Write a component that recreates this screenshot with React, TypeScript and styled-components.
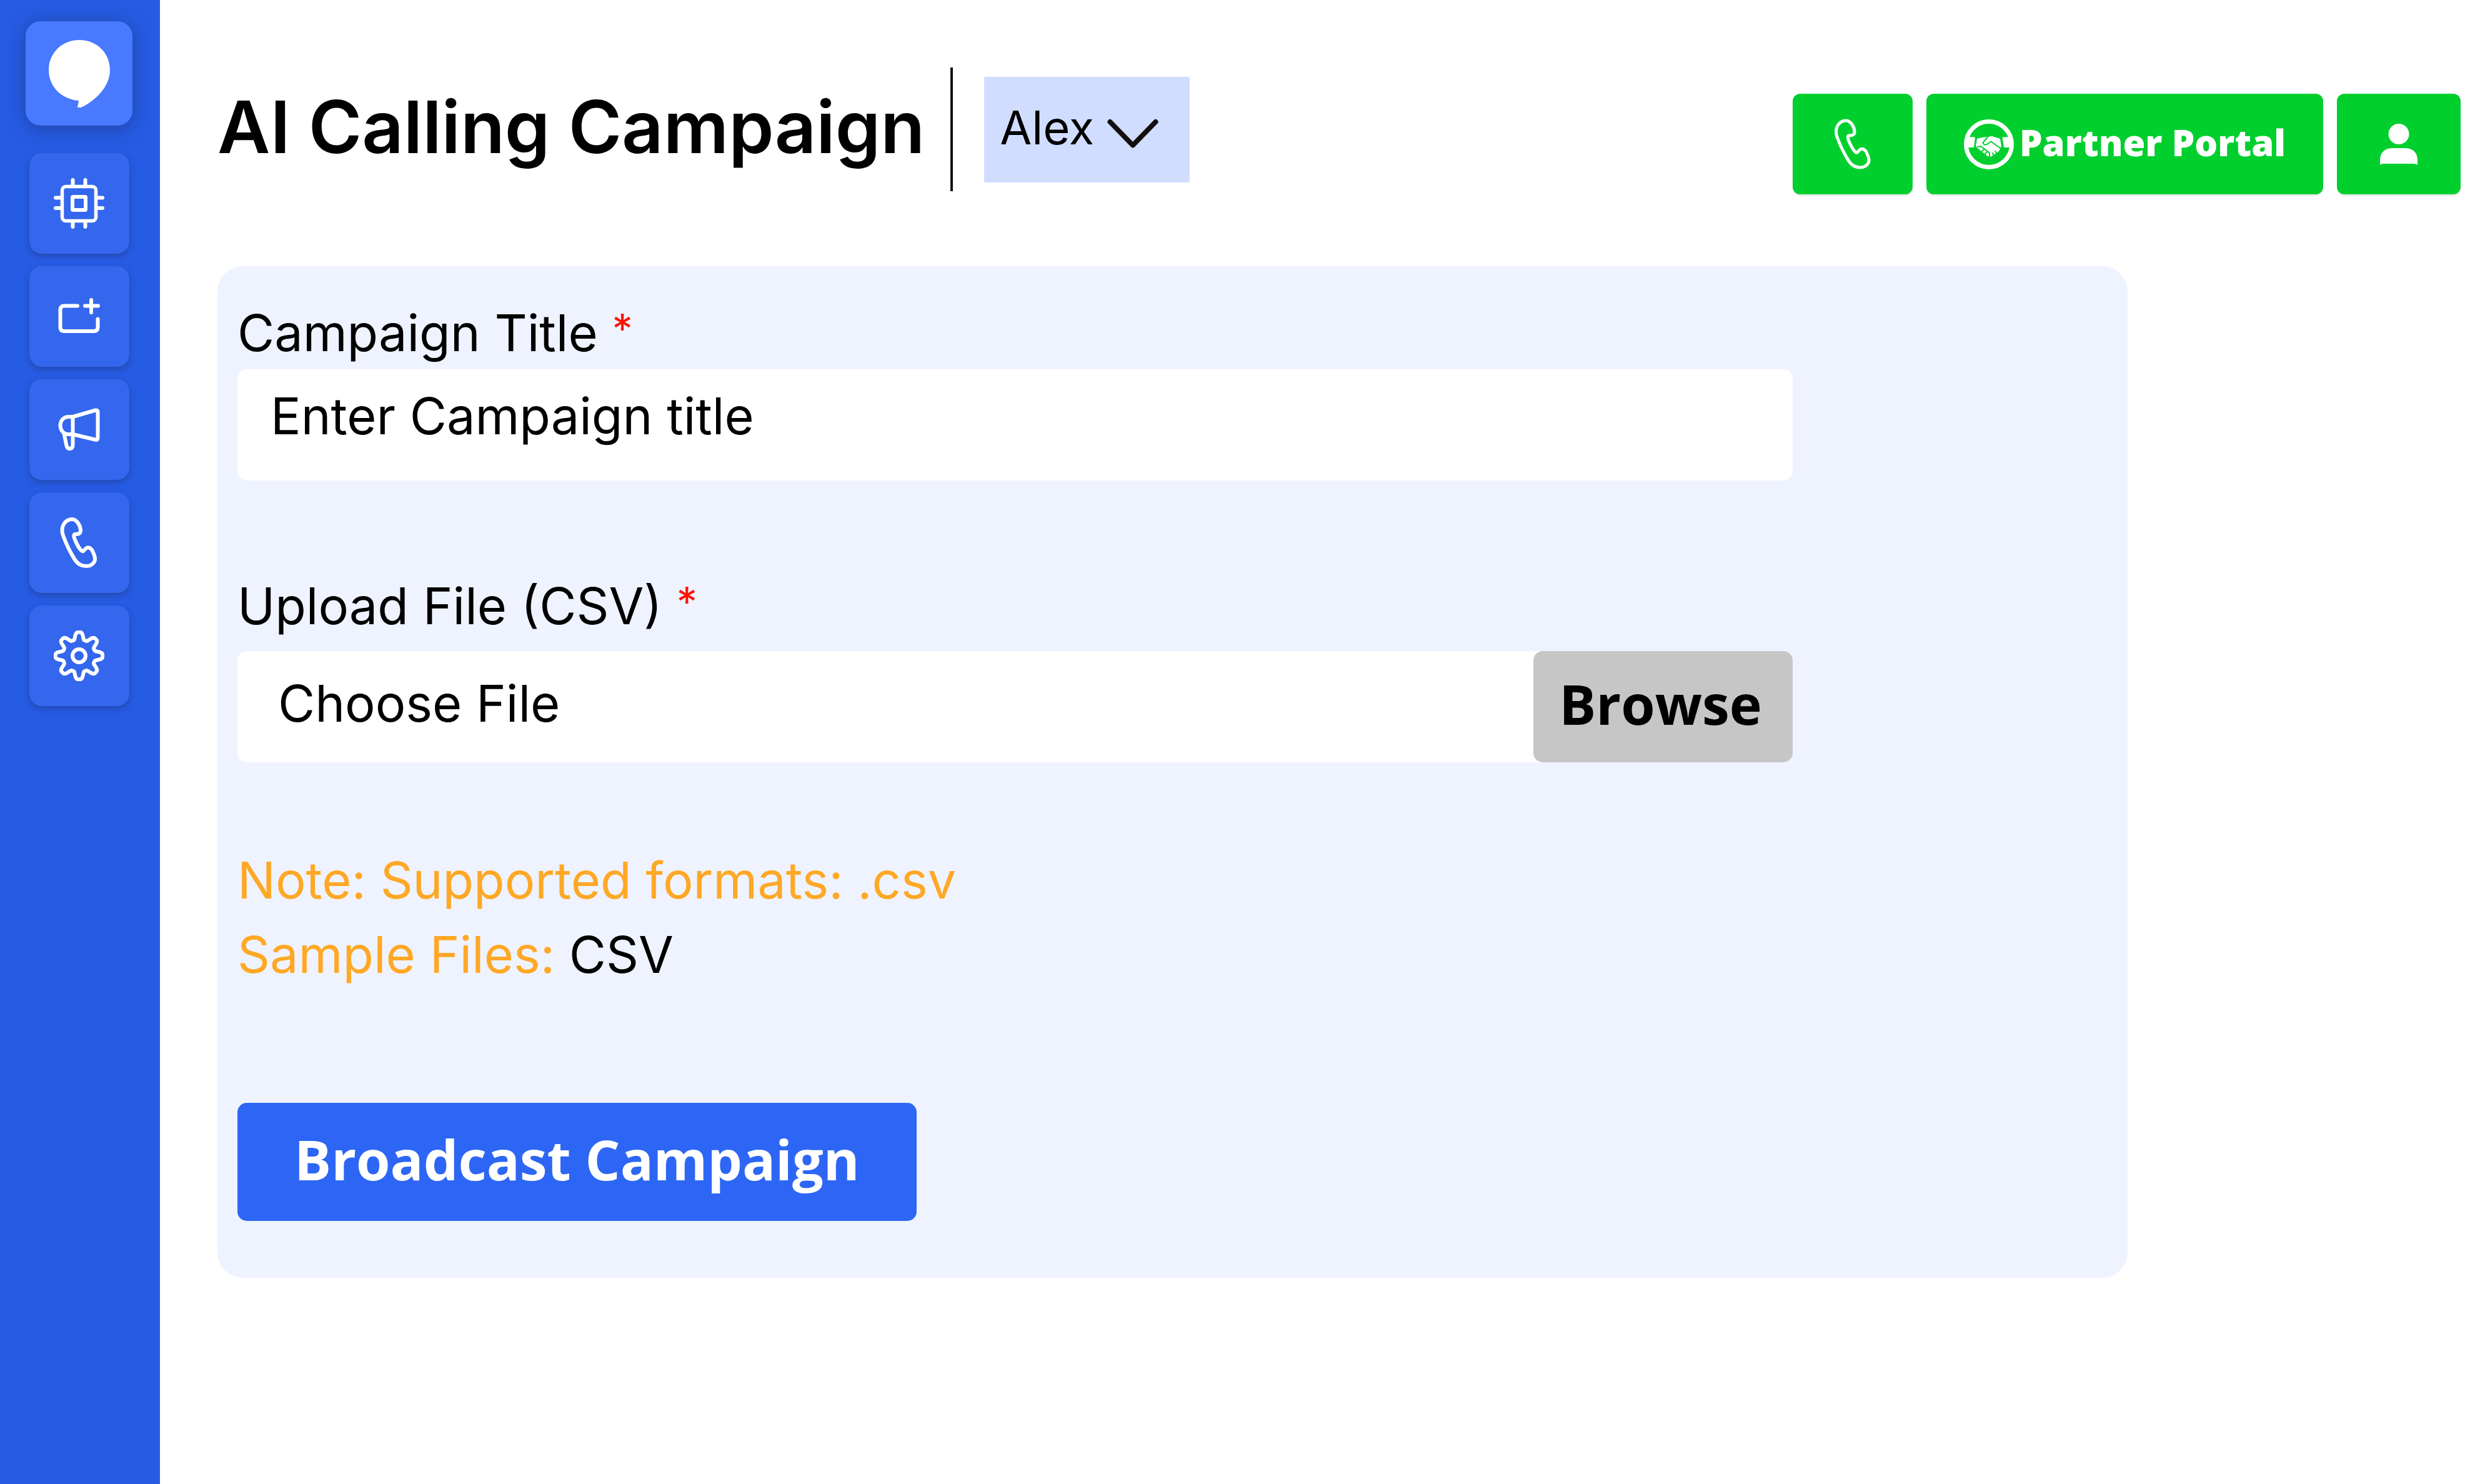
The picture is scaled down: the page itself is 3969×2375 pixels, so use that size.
import React, { useRef, useState } from "react";
import styled, { createGlobalStyle } from "styled-components";

const sans = `"Inter", "Liberation Sans", sans-serif`;
const human = `"Open Sans", "Noto Sans", sans-serif`;

const color = {
  sidebar: "#265be3",
  tile: "#3467ed",
  tileActive: "#4879ff",
  green: "#00cf2d",
  panel: "#eff3ff",
  select: "#d1ddff",
  primary: "#2d66f4",
  browse: "#c6c6c6",
  note: "#ffa826",
  required: "#ff1200",
};

const GlobalStyle = createGlobalStyle`
  *, *::before, *::after { box-sizing: border-box; }
  body { margin: 0; background: #fff; color: #000; font-family: ${sans}; }
  button, input, select { font: inherit; color: inherit; border: 0; margin: 0; }
  button { cursor: pointer; }
`;

const Page = styled.div`
  display: flex;
  min-height: 100vh;
`;

const Sidebar = styled.nav`
  display: flex;
  flex-direction: column;
  align-items: center;
  flex: 0 0 256px;
  gap: 20px;
  padding: 34px 3px 0 0;
  background: ${color.sidebar};
`;

const NavTile = styled.button`
  display: grid;
  place-items: center;
  width: 160px;
  height: 161px;
  padding: 0;
  border-radius: 20px;
  background: ${color.tile};
  box-shadow: 0 4px 10px rgba(30, 50, 110, 0.45);
`;

const LogoTile = styled(NavTile)`
  width: 171px;
  height: 167px;
  margin-bottom: 24px;
  border-radius: 24px;
  background: ${color.tileActive};
  box-shadow: 0 4px 28px rgba(30, 50, 110, 0.55);
`;

const Main = styled.main`
  flex: 1;
  min-width: 0;
  padding: 108px 31px 80px 92px;
`;

const Header = styled.header`
  display: flex;
  align-items: flex-start;
  justify-content: space-between;
  margin-bottom: 115px;
`;

const TitleGroup = styled.div`
  display: flex;
  align-items: center;
`;

const Title = styled.h1`
  margin: 0;
  padding-bottom: 8px;
  font-size: 116px;
  font-weight: 600;
  line-height: 120px;
  white-space: nowrap;
`;

const Divider = styled.span`
  width: 4px;
  height: 198px;
  margin: 0 50px 0 41px;
  background: #111;
`;

const AgentPicker = styled.div`
  position: relative;
`;

const AgentSelect = styled.select`
  display: block;
  width: 329px;
  height: 169px;
  padding: 0 120px 6px 25px;
  border-radius: 2px;
  appearance: none;
  background: ${color.select};
  font-size: 74px;
`;

const PickerArrow = styled.svg`
  position: absolute;
  right: 50px;
  top: 67px;
  pointer-events: none;
`;

const Actions = styled.div`
  display: flex;
  gap: 22px;
  margin-top: 42px;
`;

const ActionButton = styled.button<{ $width: number }>`
  display: flex;
  align-items: center;
  justify-content: center;
  gap: 9px;
  width: ${(p) => p.$width}px;
  height: 161px;
  padding: 0;
  border-radius: 12px;
  background: ${color.green};
  box-shadow: 0 3px 0 #ececec;
  color: #fff;
`;

const ActionText = styled.span`
  padding-bottom: 6px;
  font-family: ${human};
  font-size: 58px;
  font-weight: 800;
  line-height: 80px;
  white-space: nowrap;
`;

const Panel = styled.form`
  display: flex;
  flex-direction: column;
  margin-right: 533px;
  padding: 57px 536px 91px 32px;
  border-radius: 40px;
  background: ${color.panel};
  font-size: 81px;
`;

const Field = styled.div<{ $gap: number }>`
  display: flex;
  flex-direction: column;
  gap: ${(p) => p.$gap}px;
  & + & {
    margin-top: 151px;
  }
`;

const Label = styled.label`
  line-height: 100px;
`;

const Required = styled.span`
  color: ${color.required};
  font-size: 66px;
  line-height: 60px;
  vertical-align: 12px;
`;

const TextInput = styled.input`
  width: 100%;
  height: 178px;
  padding: 0 53px 28px;
  border-radius: 15px;
  background: #fff;
  &::placeholder {
    color: #000;
    opacity: 1;
  }
`;

const FileRow = styled.div`
  display: flex;
  height: 178px;
  border-radius: 15px;
  background: #fff;
`;

const FileName = styled.span`
  display: flex;
  align-items: center;
  flex: 1;
  padding: 0 65px 10px;
`;

const HiddenFile = styled.input`
  position: absolute;
  width: 1px;
  height: 1px;
  opacity: 0;
  pointer-events: none;
`;

const SolidButton = styled.button`
  padding: 0 91px 10px;
  border-radius: 15px;
  background: ${color.primary};
  color: #fff;
  font-family: ${human};
  font-size: 88px;
  font-weight: 700;
  white-space: nowrap;
`;

const BrowseButton = styled(SolidButton)`
  width: 415px;
  padding: 0 8px 10px 0;
  background: ${color.browse};
  color: #000;
`;

const SubmitButton = styled(SolidButton)`
  align-self: flex-start;
  height: 189px;
`;

const Notes = styled.div`
  margin: 130px 0 177px;
  color: ${color.note};
  line-height: 119px;
`;

const NoteLine = styled.p`
  margin: 0;
`;

const SampleLink = styled.a`
  color: #000;
  text-decoration: none;
`;

const BubbleLogo = () => (
  <svg width="100" height="110" viewBox="0 0 100 110" aria-hidden="true">
    <path
      fill="#fff"
      d="M50 1C78 1 99 22 99 49C99 77 74 99 53 109H47L49 98C22 96 1 76 1 49C1 22 22 1 50 1Z"
    />
  </svg>
);

const LineIcon = ({ stroke = 6, children }: { stroke?: number; children: React.ReactNode }) => (
  <svg
    width="81"
    height="81"
    viewBox="0 0 81 81"
    fill="none"
    stroke="#fff"
    strokeWidth={stroke}
    strokeLinecap="round"
    strokeLinejoin="round"
    aria-hidden="true"
  >
    {children}
  </svg>
);

const ChipIcon = () => (
  <LineIcon>
    <rect x="13.5" y="13.5" width="54" height="55" rx="6" strokeWidth="5.5" />
    <rect x="30" y="30" width="21" height="21" rx="1" />
    <path d="M30.5 3V11M50.5 3V11M30.5 71V78M50.5 71V78M3 31.5H11M3 48H11M70 31.5H78M70 48H78" />
  </LineIcon>
);

const AddBoxIcon = () => (
  <LineIcon>
    <path d="M38 23.5H17Q10.5 23.5 10.5 30V57.5Q10.5 64 17 64H64Q70.5 64 70.5 57.5V44.5" />
    <path d="M60 14V34M50 23.5H71" />
  </LineIcon>
);

const MegaphoneIcon = () => (
  <LineIcon>
    <path d="M30.5 20L67 9.5Q70.5 9 70.5 12.5V53.5Q70.5 58 66 56.5L30.5 48H22C15 47 10.5 41 10.5 34C10.5 26 16 20 24 20Z" />
    <path d="M30.5 20V65Q30.5 71 25.5 71Q21.5 71 20.5 66.5L16.5 47" />
  </LineIcon>
);

const PhoneIcon = ({ stroke = 6 }: { stroke?: number }) => (
  <LineIcon stroke={stroke}>
    <path d="M28 3C37 2 43 14 43 21C43 26 39 27 35 27C31 27 32 31 34 36C37 43 40 49 44 53C47 56 48 53 51 50C56 46 61 50 63 56C66 62 67 67 65 71C62 76 58 78 52 78C43 78 38 74 34 68C27 57 20 43 15 29C11 18 15 5 28 3Z" />
  </LineIcon>
);

/* Eight evenly spaced, flat-topped lobes traced around the hub. */
const gearOutline = Array.from({ length: 240 }, (_, i) => {
  const angle = (i / 240) * Math.PI * 2;
  const lobe = Math.sin((Math.cos(8 * angle) * Math.PI) / 2);
  const radius = 32 + 5.8 * lobe;
  const x = 40.5 + radius * Math.sin(angle);
  const y = 40.5 - radius * Math.cos(angle);
  return `${x.toFixed(2)},${y.toFixed(2)}`;
}).join(" ");

const GearIcon = () => (
  <LineIcon>
    <polygon points={gearOutline} />
    <circle cx="40.5" cy="40.5" r="10.5" />
  </LineIcon>
);

const HandshakeIcon = () => (
  <svg width="80" height="80" viewBox="0 0 80 80" fill="none" aria-hidden="true">
    <circle cx="40" cy="40" r="36.5" stroke="#fff" strokeWidth="7" />
    <path fill="#fff" d="M3 28L18 28.5L16 45H3ZM77 28L61.5 28.5L64 45H77Z" />
    <path
      fill="#fff"
      d="M21 31L29 29L36 28L45 27L58 31L60 43L56 51L44 59.5L38 59L23 47L19 43Z"
    />
    <path
      stroke={color.green}
      strokeWidth="2"
      strokeLinejoin="round"
      strokeLinecap="round"
      d="M39 27L30.5 37.5Q32 42 37 40L43.5 35.5L58 46M22 44L27 43L41 54V60M33 47L29 51M38 51L34 55M50 51L52 54M46 54L48 58"
    />
  </svg>
);

const UserIcon = () => (
  <svg width="60" height="66" viewBox="0 0 60 66" fill="#fff" aria-hidden="true">
    <circle cx="30" cy="16.5" r="16.5" />
    <path d="M0 66V58C0 46 8 39 20 39H40C52 39 60 46 60 58V66Q58 64 54 64H6Q2 64 0 66Z" />
  </svg>
);

const navItems = [
  { label: "AI agents", icon: <ChipIcon /> },
  { label: "New campaign", icon: <AddBoxIcon /> },
  { label: "Campaigns", icon: <MegaphoneIcon /> },
  { label: "Calls", icon: <PhoneIcon /> },
  { label: "Settings", icon: <GearIcon /> },
];

export default function App() {
  const fileInput = useRef<HTMLInputElement>(null);
  const [fileName, setFileName] = useState("Choose File");

  return (
    <>
      <GlobalStyle />
      <Page>
        <Sidebar aria-label="Main">
          <LogoTile type="button" aria-label="Home">
            <BubbleLogo />
          </LogoTile>
          {navItems.map((item) => (
            <NavTile key={item.label} type="button" aria-label={item.label}>
              {item.icon}
            </NavTile>
          ))}
        </Sidebar>
        <Main>
          <Header>
            <TitleGroup>
              <Title>AI Calling Campaign</Title>
              <Divider />
              <AgentPicker>
                <AgentSelect aria-label="Agent" defaultValue="Alex">
                  <option>Alex</option>
                </AgentSelect>
                <PickerArrow
                  width="82"
                  height="48"
                  viewBox="0 0 82 48"
                  fill="none"
                  stroke="#12100e"
                  strokeWidth="8"
                  strokeLinecap="round"
                  strokeLinejoin="round"
                  aria-hidden="true"
                >
                  <path d="M4.5 5L41 42.5L77.5 5" />
                </PickerArrow>
              </AgentPicker>
            </TitleGroup>
            <Actions>
              <ActionButton type="button" $width={192} aria-label="Call">
                <PhoneIcon stroke={5} />
              </ActionButton>
              <ActionButton type="button" $width={635}>
                <HandshakeIcon />
                <ActionText>Partner Portal</ActionText>
              </ActionButton>
              <ActionButton type="button" $width={198} aria-label="Account">
                <UserIcon />
              </ActionButton>
            </Actions>
          </Header>

          <Panel onSubmit={(e) => e.preventDefault()}>
            <Field $gap={8}>
              <Label htmlFor="campaign-title">
                Campaign Title <Required>*</Required>
              </Label>
              <TextInput id="campaign-title" type="text" placeholder="Enter Campaign title" />
            </Field>
            <Field $gap={22}>
              <Label htmlFor="campaign-file">
                Upload File (CSV) <Required>*</Required>
              </Label>
              <FileRow>
                <FileName>{fileName}</FileName>
                <HiddenFile
                  ref={fileInput}
                  id="campaign-file"
                  type="file"
                  accept=".csv"
                  onChange={(e) => setFileName(e.target.files?.[0]?.name ?? "Choose File")}
                />
                <BrowseButton type="button" onClick={() => fileInput.current?.click()}>
                  Browse
                </BrowseButton>
              </FileRow>
            </Field>
            <Notes>
              <NoteLine>Note: Supported formats: .csv</NoteLine>
              <NoteLine>
                Sample Files: <SampleLink href="#sample-csv">CSV</SampleLink>
              </NoteLine>
            </Notes>
            <SubmitButton type="submit">Broadcast Campaign</SubmitButton>
          </Panel>
        </Main>
      </Page>
    </>
  );
}
